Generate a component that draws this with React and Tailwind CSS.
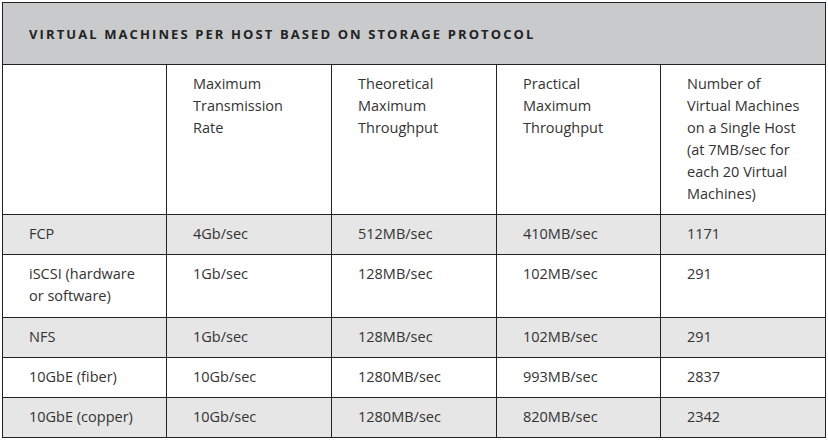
const columns = [
  '',
  'Maximum Transmission Rate',
  'Theoretical Maximum Throughput',
  'Practical Maximum Throughput',
  'Number of Virtual Machines on a Single Host (at 7MB/sec for each 20 Virtual Machines)',
];

const rows = [
  ['FCP', '4Gb/sec', '512MB/sec', '410MB/sec', '1171'],
  ['iSCSI (hardware or software)', '1Gb/sec', '128MB/sec', '102MB/sec', '291'],
  ['NFS', '1Gb/sec', '128MB/sec', '102MB/sec', '291'],
  ['10GbE (fiber)', '10Gb/sec', '1280MB/sec', '993MB/sec', '2837'],
  ['10GbE (copper)', '10Gb/sec', '1280MB/sec', '820MB/sec', '2342'],
];

const widths = ['w-[164px]', 'w-[165px]', 'w-[165px]', 'w-[164px]', 'w-[165px]'];

export default function App() {
  return (
    <div className="w-[828px] h-[442px] bg-white pt-[2px] pl-[2px] font-['Open_Sans',sans-serif] text-[#333]">
      <table className="w-[823px] table-fixed border-collapse border-[1.5px] border-[#222]">
        <colgroup>
          {widths.map((w, i) => (
            <col key={i} className={w} />
          ))}
        </colgroup>
        <thead>
          <tr>
            <th
              colSpan={5}
              className="h-[62px] bg-[#c9cacb] border border-[#222] pl-[26px] pt-[2px] text-left text-[13px] font-bold tracking-[2.1px] text-[#222]"
            >
              VIRTUAL MACHINES PER HOST BASED ON STORAGE PROTOCOL
            </th>
          </tr>
          <tr>
            {columns.map((c, i) => (
              <th
                key={i}
                className="h-[150px] align-top border border-[#222] pl-[26px] pr-[22px] pt-[8px] text-left text-[14.5px] leading-[22px] font-normal"
              >
                {c}
              </th>
            ))}
          </tr>
        </thead>
        <tbody>
          {rows.map((r, ri) => (
            <tr key={ri} className={ri % 2 === 0 ? 'bg-[#e6e6e6]' : 'bg-white'}>
              {r.map((cell, ci) => (
                <td
                  key={ci}
                  className={
                    'align-top border border-[#222] pl-[26px] pr-[22px] pt-[8px] text-[14.5px] leading-[22px] ' +
                    (ri === 1 ? 'h-[63px]' : 'h-[40px]')
                  }
                >
                  {cell}
                </td>
              ))}
            </tr>
          ))}
        </tbody>
      </table>
    </div>
  );
}
